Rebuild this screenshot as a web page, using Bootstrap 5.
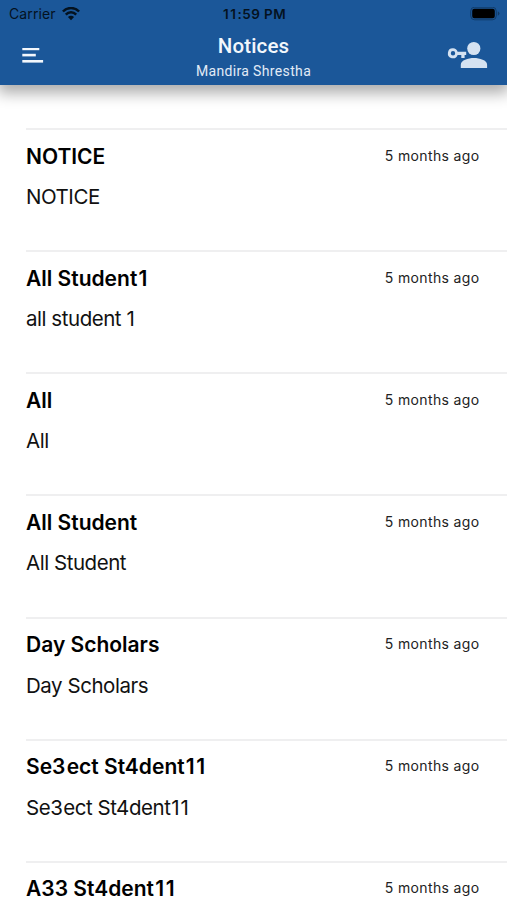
<!DOCTYPE html>
<html lang="en">
<head>
<meta charset="utf-8">
<meta name="viewport" content="width=device-width, initial-scale=1">
<title>Notices</title>
<link href="https://cdn.jsdelivr.net/npm/bootstrap@5.3.0/dist/css/bootstrap.min.css" rel="stylesheet">
<style>
body{font-family:Inter,"Liberation Sans",sans-serif;color:#000;background:#fff;height:900px}
.app-head{background:#1b5799;height:85px;box-shadow:0 6px 14px 2px rgba(0,0,0,.33)}
.status{height:28px;padding:0 7px 0 9px;color:#04121f;font-size:14px;line-height:28px}
.carrier{letter-spacing:.12px}
.wifi{margin-left:6px}
.clock{font-weight:600;font-size:13.5px;letter-spacing:.4px}
.clock .ones{letter-spacing:1.6px}
.titlebar{height:57px;padding:0 19px 0 19px;color:#f3f7fc;font-family:Roboto,sans-serif}
.burger{margin:20px 0 0 3px}
.title{font-size:20.5px;font-weight:500;line-height:24px;padding-top:6px;letter-spacing:.15px}
.person{font-size:14px;line-height:18px;margin-top:4px;color:#e2ebf6;letter-spacing:.35px}
.notices{padding:43px 0 0 26px}
.notice{height:122.15px;border:0;border-top:2px solid #efeff0;padding:14.55px 27.5px 0 0}
.notice:last-child{height:auto}
.n-title{font-size:21px;font-weight:600;line-height:24px}
.n-title .num{letter-spacing:1.2px}
.n-title .ones{letter-spacing:1.6px}
.n-time{font-size:14px;line-height:22px;color:#222;letter-spacing:.36px}
.n-body{font-size:20.5px;line-height:28px;margin-top:14.4px;color:#111;letter-spacing:-.46px}
.n-body .num{letter-spacing:.3px}
.n-body .ones{letter-spacing:1.1px}
</style>
<script src="https://cdn.jsdelivr.net/npm/bootstrap@5.3.0/dist/js/bootstrap.bundle.min.js"></script>
</head>
<body class="overflow-hidden d-flex flex-column">
<header class="app-head position-relative flex-shrink-0">
  <div class="status row g-0 align-items-center">
    <div class="col d-flex align-items-center"><span class="carrier">Carrier</span>
      <svg class="wifi" width="18" height="14" viewBox="0 0 18 14" fill="none" stroke="#04121f" stroke-width="2.5"><path d="M.9 4.5C5.4-.1 12.6-.1 17.1 4.5M3.8 7.6c2.9-3 7.5-3 10.4 0"/><path d="M9 13.2 5.9 10c1.7-1.7 4.5-1.7 6.2 0z" fill="#04121f" stroke="none"/></svg>
    </div>
    <div class="col-auto clock"><span class="ones">11</span>:59 PM</div>
    <div class="col d-flex justify-content-end">
      <svg width="30" height="14" viewBox="0 0 30 14"><rect x=".7" y=".2" width="25.6" height="12.6" rx="4" fill="none" stroke="#113b68" stroke-width="1"/><rect x="2.2" y="1.8" width="22.6" height="9.4" rx="2.2" fill="#000"/><path d="M27.8 4.2q1.7.7 1.7 2.3t-1.7 2.3z" fill="#113b68"/></svg>
    </div>
  </div>
  <div class="titlebar row g-0">
    <div class="col"><svg class="burger d-block" width="22" height="17" viewBox="0 0 22 17" fill="#f3f7fc"><rect x=".3" y="-.4" width="17" height="2.6"/><rect x=".3" y="5.8" width="13.5" height="2.6"/><rect x=".3" y="12" width="20.8" height="2.6"/></svg></div>
    <div class="col-auto text-center"><div class="title">Notices</div><div class="person">Mandira Shrestha</div></div>
    <div class="col d-flex justify-content-end"><svg class="mt-2" width="41" height="34" viewBox="447 36 41 34" fill="#d5e2f1"><circle cx="473.8" cy="48.5" r="6.6"/><path d="M460.8 68v-3.2c0-4.6 7.4-6.7 13.1-6.7s13.2 2.1 13.2 6.7V68z"/><path fill-rule="evenodd" d="M453 48.3a5 5 0 0 1 4.6 3.5h8.6v3.1h-1.6v3.2h-3.3v-3.2h-3.7A5 5 0 1 1 453 48.3zM453 51.1a2.2 2.2 0 1 0 0 4.4 2.2 2.2 0 0 0 0-4.4z"/></svg></div>
  </div>
</header>
<main class="notices list-group list-group-flush flex-shrink-0">
  <article class="notice"><div class="d-flex justify-content-between"><div class="n-title">NOTICE</div><div class="n-time">5 months ago</div></div><div class="n-body">NOTICE</div></article>
  <article class="notice"><div class="d-flex justify-content-between"><div class="n-title">All Studen<span class="num">t</span>1</div><div class="n-time">5 months ago</div></div><div class="n-body">all student 1</div></article>
  <article class="notice"><div class="d-flex justify-content-between"><div class="n-title">All</div><div class="n-time">5 months ago</div></div><div class="n-body">All</div></article>
  <article class="notice"><div class="d-flex justify-content-between"><div class="n-title">All Student</div><div class="n-time">5 months ago</div></div><div class="n-body">All Student</div></article>
  <article class="notice"><div class="d-flex justify-content-between"><div class="n-title">Day Scholars</div><div class="n-time">5 months ago</div></div><div class="n-body">Day Scholars</div></article>
  <article class="notice"><div class="d-flex justify-content-between"><div class="n-title">Se<span class="num">3</span>ect St4den<span class="num">t</span><span class="ones">11</span></div><div class="n-time">5 months ago</div></div><div class="n-body">Se<span class="num">3</span>ect St4den<span class="num">t</span><span class="ones">11</span></div></article>
  <article class="notice"><div class="d-flex justify-content-between"><div class="n-title">A33 St4den<span class="num">t</span><span class="ones">11</span></div><div class="n-time">5 months ago</div></div></article>
</main>
</body>
</html>
